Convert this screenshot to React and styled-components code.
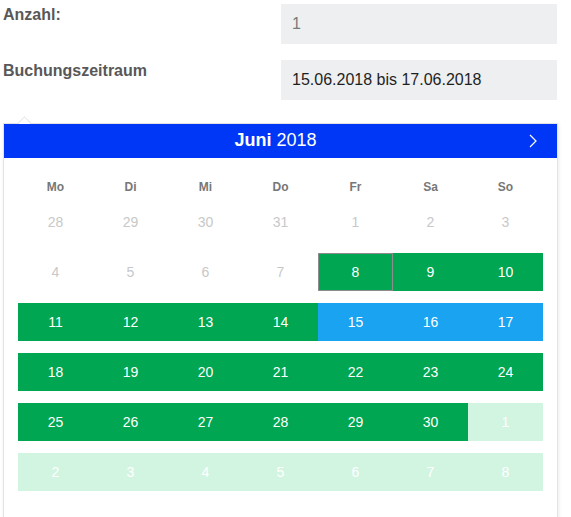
import React from "react";
import styled, { createGlobalStyle } from "styled-components";

const GlobalStyle = createGlobalStyle`
  body {
    margin: 0;
    background: #ffffff;
    font-family: "Liberation Sans", Arial, sans-serif;
  }
`;

const Page = styled.div`
  padding: 4px 0 0 3px;
  width: 555px;
`;

const FieldRow = styled.div`
  display: grid;
  grid-template-columns: 278px 276px;
  margin-bottom: 16px;
`;

const Label = styled.div`
  padding-top: 2px;
  font-size: 16px;
  font-weight: bold;
  color: #585858;
`;

const Input = styled.div`
  height: 40px;
  box-sizing: border-box;
  padding: 0 11px;
  display: flex;
  align-items: center;
  background: #eeeff0;
  font-size: 16px;
  color: ${(p) => (p.$muted ? "#7a7a7a" : "#1f1f1f")};
`;

const Calendar = styled.div`
  position: relative;
  margin-top: 23px;
  border: 1px solid #e3e3e3;
  box-shadow: 1px 2px 4px rgba(0, 0, 0, 0.08);
  background: #fff;
  padding-bottom: 14px;

  &::before {
    content: "";
    position: absolute;
    left: 16px;
    top: -6px;
    width: 8px;
    height: 8px;
    background: #fff;
    border-left: 1px solid #e6e6e6;
    border-top: 1px solid #e6e6e6;
    transform: rotate(45deg);
  }
`;

const Header = styled.div`
  position: relative;
  height: 34px;
  background: #0037f7;
  color: #fff;
  display: flex;
  align-items: center;
  justify-content: center;
  padding: 0 10px 2px 0;
  box-sizing: border-box;
  font-size: 18px;
`;

const Month = styled.span`
  font-weight: bold;
  margin-right: 5px;
`;

const Next = styled.span`
  position: absolute;
  right: 20px;
  top: 10px;
  display: flex;
`;

const Body = styled.div`
  padding: 17px 14px 0 14px;
`;

const Weekdays = styled.div`
  display: grid;
  grid-template-columns: repeat(7, 75px);
  height: 24px;
  align-items: center;
  margin-bottom: 4px;
`;

const Weekday = styled.div`
  text-align: center;
  font-size: 12px;
  font-weight: bold;
  color: #777;
`;

const Week = styled.div`
  display: grid;
  grid-template-columns: repeat(7, 75px);
  margin-bottom: 12px;
`;

const colors = {
  other: { bg: "transparent", fg: "#c8c8c8" },
  free: { bg: "#00a651", fg: "#ffffff" },
  booked: { bg: "#19a3f1", fg: "#ffffff" },
  next: { bg: "#d2f5e1", fg: "#ffffff" },
};

const Day = styled.div`
  height: 38px;
  box-sizing: border-box;
  display: flex;
  align-items: center;
  justify-content: center;
  font-size: 14px;
  background: ${(p) => colors[p.$kind].bg};
  color: ${(p) => colors[p.$kind].fg};
  border: ${(p) => (p.$today ? "1px solid #8c8c8c" : "none")};
`;

const weekdays = ["Mo", "Di", "Mi", "Do", "Fr", "Sa", "So"];

const buildWeeks = () => {
  const days = [];
  [28, 29, 30, 31].forEach((d) => days.push({ d, kind: "other" }));
  for (let d = 1; d <= 7; d++) days.push({ d, kind: "other" });
  for (let d = 8; d <= 30; d++) {
    days.push({ d, kind: d >= 15 && d <= 17 ? "booked" : "free", today: d === 8 });
  }
  for (let d = 1; d <= 8; d++) days.push({ d, kind: "next" });
  const weeks = [];
  for (let i = 0; i < days.length; i += 7) weeks.push(days.slice(i, i + 7));
  return weeks;
};

const App = () => {
  const weeks = buildWeeks();
  return (
    <Page>
      <GlobalStyle />
      <FieldRow>
        <Label>Anzahl:</Label>
        <Input $muted>1</Input>
      </FieldRow>
      <FieldRow>
        <Label>Buchungszeitraum</Label>
        <Input>15.06.2018 bis 17.06.2018</Input>
      </FieldRow>
      <Calendar>
        <Header>
          <Month>Juni</Month>2018
          <Next>
            <svg width="8" height="14" viewBox="0 0 8 14">
              <polyline points="1,1 7,7 1,13" fill="none" stroke="#fff" strokeWidth="1.2" />
            </svg>
          </Next>
        </Header>
        <Body>
          <Weekdays>
            {weekdays.map((w) => (
              <Weekday key={w}>{w}</Weekday>
            ))}
          </Weekdays>
          {weeks.map((week, i) => (
            <Week key={i}>
              {week.map((day, j) => (
                <Day key={j} $kind={day.kind} $today={day.today}>
                  {day.d}
                </Day>
              ))}
            </Week>
          ))}
        </Body>
      </Calendar>
    </Page>
  );
};

export default App;
